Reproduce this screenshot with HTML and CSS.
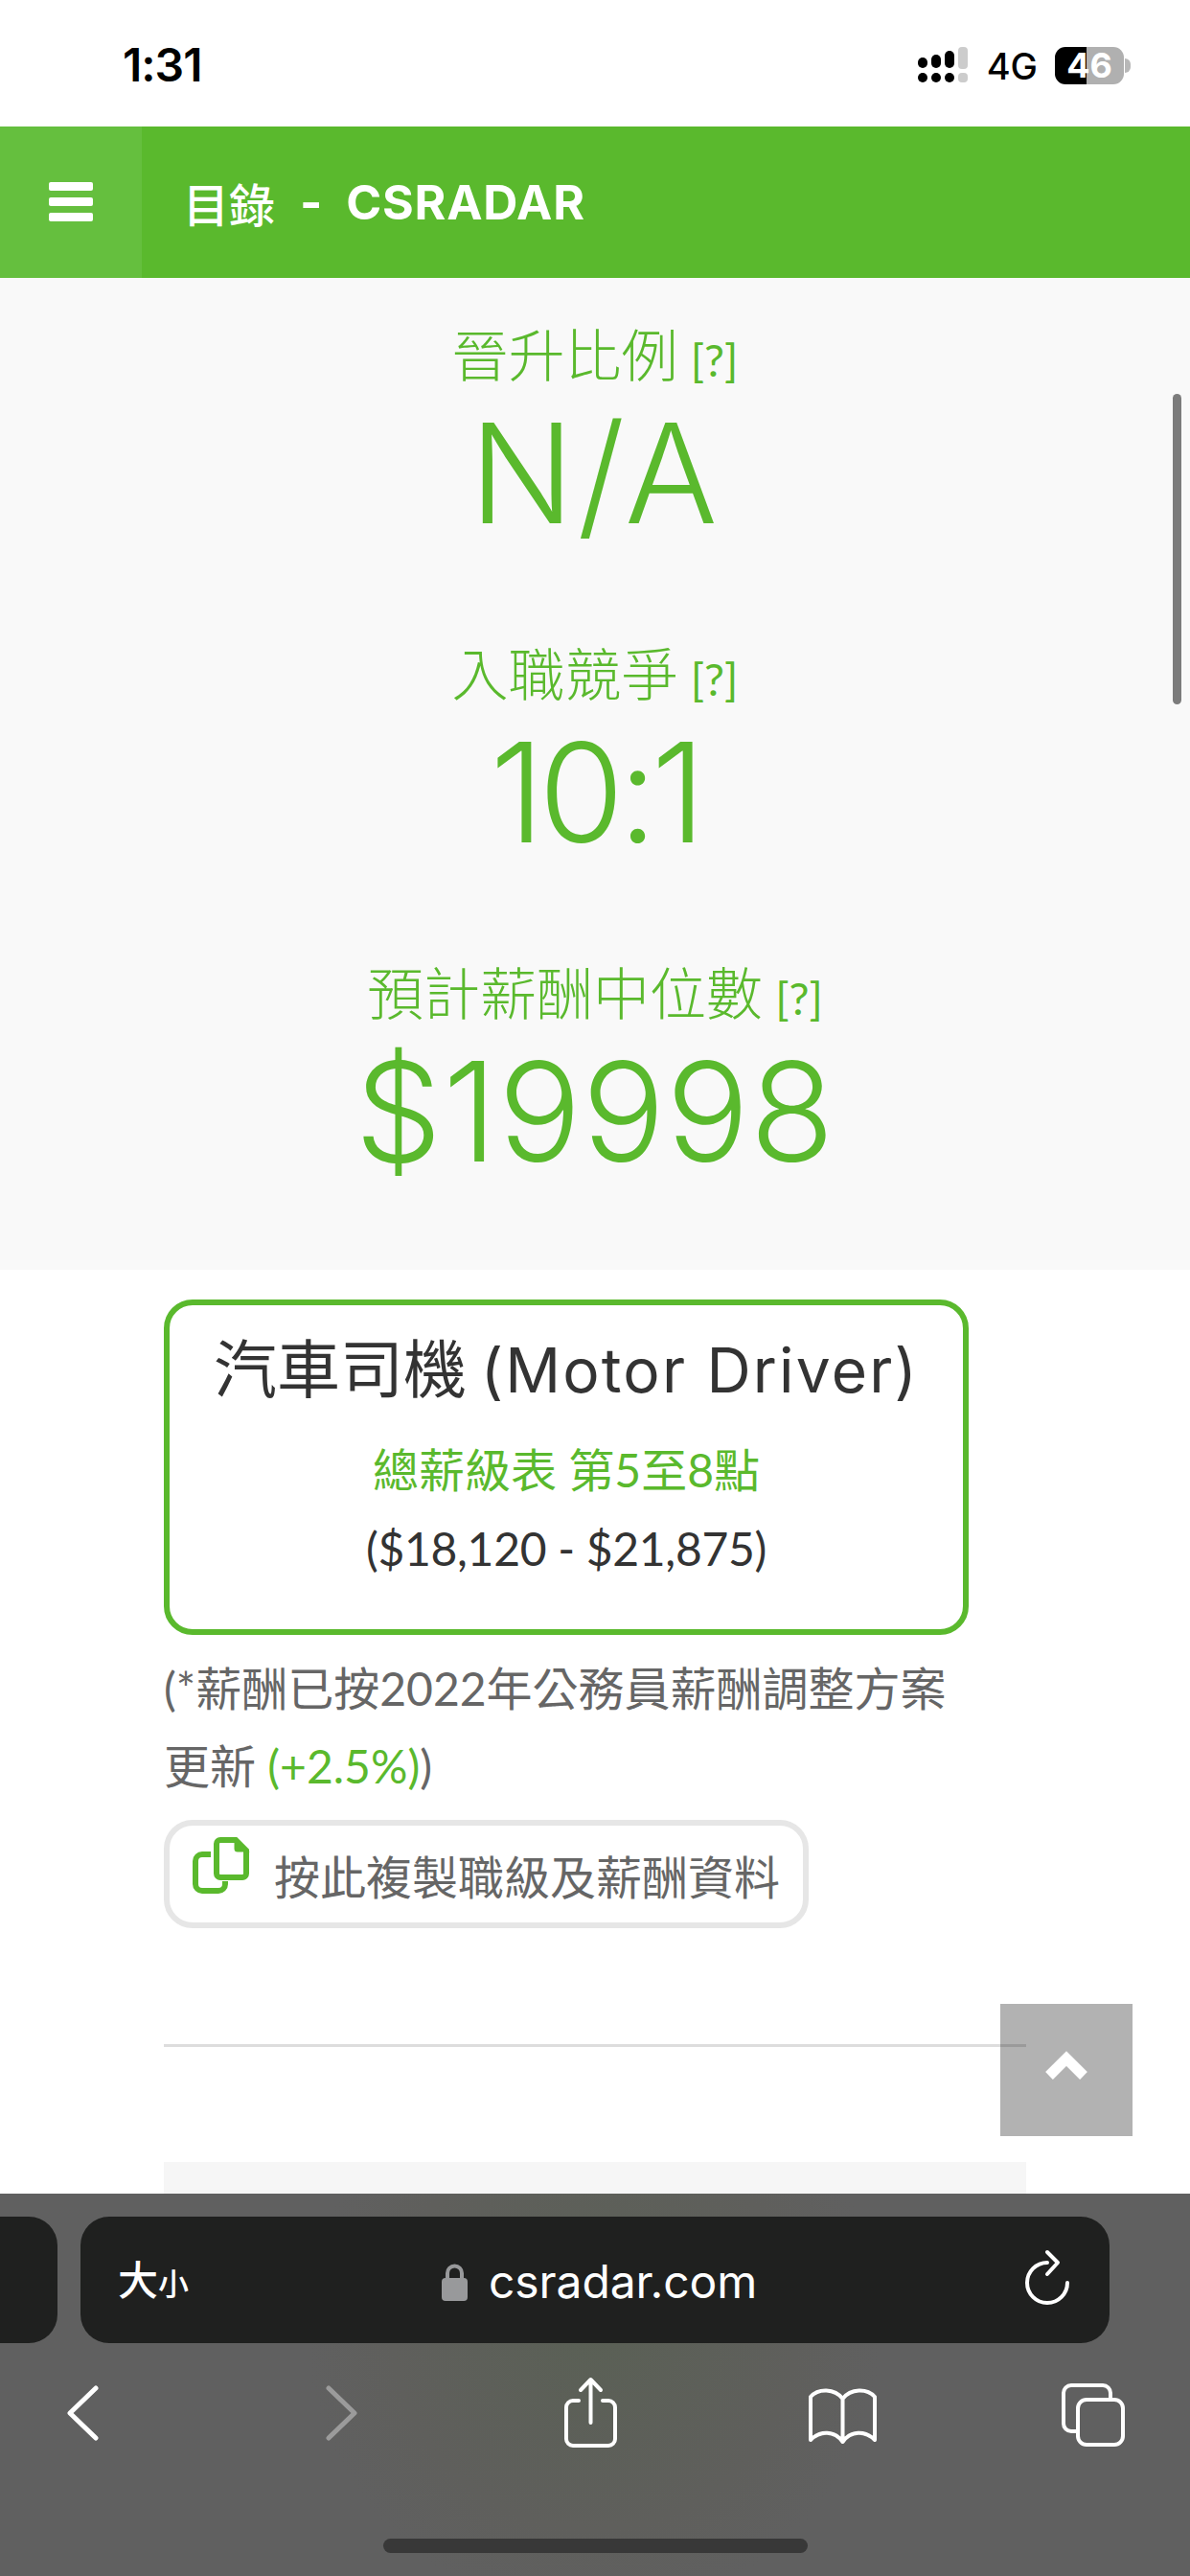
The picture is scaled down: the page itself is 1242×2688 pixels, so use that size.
FILE: index.html
```html
<!DOCTYPE html>
<html lang="zh-Hant">
<head>
<meta charset="utf-8">
<title>目錄 - CSRADAR</title>
<link rel="stylesheet" href="styles.css">
</head>
<body>
<div class="page">
  <header class="status">
    <span class="clock">1:31</span>
    <div class="status-right">
      <svg class="signal" width="52" height="38" viewBox="0 0 52 38">
        <g fill="#000">
          <rect x="0" y="11" width="10" height="11" rx="5"/><rect x="14" y="8" width="10" height="14" rx="5"/><rect x="28" y="4" width="10" height="18" rx="5"/>
          <rect x="0" y="27" width="10" height="10" rx="5"/><rect x="14" y="27" width="10" height="10" rx="5"/><rect x="28" y="27" width="10" height="10" rx="5"/>
        </g>
        <g fill="#ccc"><rect x="42" y="0" width="10" height="23" rx="4"/><rect x="42" y="27" width="10" height="10" rx="4"/></g>
      </svg>
      <span class="net">4G</span>
      <div class="battery"><span>46</span></div>
    </div>
  </header>

  <nav class="nav">
    <div class="menu"><i></i><i></i><i></i></div>
    <div class="brand"><span class="brand-cjk">目錄</span><span class="brand-dash">-</span><span>CSRADAR</span></div>
  </nav>

  <section class="stats">
    <div class="stat">
      <div class="stat-label">晉升比例 <small>[?]</small></div>
      <div class="stat-value stat-na">N/A</div>
    </div>
    <div class="stat">
      <div class="stat-label">入職競爭 <small>[?]</small></div>
      <div class="stat-value stat-ratio">10:1</div>
    </div>
    <div class="stat">
      <div class="stat-label">預計薪酬中位數 <small>[?]</small></div>
      <div class="stat-value stat-money">$19998</div>
    </div>
  </section>

  <main class="content">
    <div class="card">
      <h2 class="card-title">汽車司機 <span class="latin">(Motor Driver)</span></h2>
      <div class="card-scale">總薪級表 第5至8點</div>
      <div class="card-range">($18,120 - $21,875)</div>
    </div>
    <p class="note">(*薪酬已按2022年公務員薪酬調整方案更新 <span class="green">(+2.5%)</span>)</p>
    <button class="copy">
      <svg class="copy-icon" width="60" height="60" viewBox="0 0 60 60" fill="none" stroke="#5ab92d" stroke-width="6">
        <path d="M19 18H10a7 7 0 0 0-7 7V49a7 7 0 0 0 7 7H27a7 7 0 0 0 7-7V46"/>
        <path d="M29 3H45L56 14V38a4 4 0 0 1-4 4H29a4 4 0 0 1-4-4V7a4 4 0 0 1 4-4Z"/>
        <path d="M45 3L56 14H47a2 2 0 0 1-2-2Z" fill="#5ab92d" stroke-width="3"/>
      </svg>
      <span class="copy-text">按此複製職級及薪酬資料</span>
    </button>
    <hr class="rule">
    <div class="next-box"></div>
  </main>

  <div class="scrollbar"></div>
  <div class="to-top">
    <svg width="46" height="32" viewBox="0 0 46 32" fill="none" stroke="#fff" stroke-width="11" stroke-linejoin="miter"><path d="M5 26L23 8L41 26"/></svg>
  </div>

  <footer class="chrome">
    <div class="address-row">
      <div class="tab-prev"></div>
      <div class="address">
        <span class="aa">大<small>小</small></span>
        <div class="url">
          <svg width="27" height="40" viewBox="0 0 27 40"><path d="M6 18V11a7.500 7.500 0 0 1 15 0V18" fill="none" stroke="#98999b" stroke-width="4"/><rect x="0" y="16" width="27" height="24" rx="4" fill="#98999b"/></svg>
          <span>csradar.com</span>
        </div>
        <svg class="reload" width="50" height="58" viewBox="0 0 50 58" fill="none" stroke="#fff" stroke-width="4" stroke-linecap="round" stroke-linejoin="round"><path d="M25 14A21 21 0 1 0 46 35"/><path d="M25 3L36 14L25 26"/></svg>
      </div>
    </div>
    <div class="toolbar">
      <svg class="ti-back" width="35" height="58" viewBox="0 0 35 58" fill="none" stroke="#fff" stroke-width="5" stroke-linecap="round" stroke-linejoin="round"><path d="M31 3L4 29L31 55"/></svg>
      <svg class="ti-fwd" width="35" height="58" viewBox="0 0 35 58" fill="none" stroke="#9b9b9b" stroke-width="5" stroke-linecap="round" stroke-linejoin="round"><path d="M4 3L31 29L4 55"/></svg>
      <svg class="ti-share" width="59" height="76" viewBox="0 0 59 76" fill="none" stroke="#fff" stroke-width="4" stroke-linecap="round" stroke-linejoin="round"><path d="M17 25H11a7 7 0 0 0-7 7V65a7 7 0 0 0 7 7H48a7 7 0 0 0 7-7V32a7 7 0 0 0-7-7H42"/><path d="M29.500 3V48M19 14L29.500 3L40 14"/></svg>
      <svg class="ti-book" width="75" height="62" viewBox="0 0 75 62" fill="none" stroke="#fff" stroke-width="4" stroke-linecap="round" stroke-linejoin="round"><path d="M37.500 13C29 2 12 2 4 11V56C14 46 29 46 37.500 58C46 46 61 46 71 56V11C63 2 46 2 37.500 13ZM37.500 13V58"/></svg>
      <svg class="ti-tabs" width="70" height="70" viewBox="0 0 70 70" fill="none" stroke="#fff" stroke-width="4"><path d="M19 52H12a8 8 0 0 1-8-8V12a8 8 0 0 1 8-8H45a8 8 0 0 1 8 8V19"/><rect x="19" y="19" width="47" height="47" rx="9"/></svg>
    </div>
    <div class="home"></div>
  </footer>
</div>
</body>
</html>
```
FILE: styles.css
```css
* { box-sizing: border-box; }
html, body { margin: 0; padding: 0; background: #fff; }
body { font-family: "Lato", "Noto Sans CJK TC", sans-serif; }
.page { position: relative; width: 1242px; height: 2688px; overflow: hidden; background: #fff; }

.status { height: 132px; padding: 42px 69px 0 128px; display: flex; justify-content: space-between; align-items: flex-start; }
.clock { font: 600 48px/52px "Inter", sans-serif; letter-spacing: -1px; color: #000; }
.status-right { display: flex; align-items: flex-start; padding-top: 7px; }
.signal { display: block; margin-right: 20px; }
.net { font: 500 38px/42px "Inter", sans-serif; color: #000; margin-top: -1px; margin-right: 18px; }
.battery { position: relative; width: 72px; height: 39px; border-radius: 11px; background: linear-gradient(90deg, #000 33px, #b0b0b0 33px); color: #fff; display: flex; align-items: center; justify-content: center; font: 700 36px/39px "Inter", sans-serif; }
.battery::after { content: ""; position: absolute; left: 73px; top: 12px; width: 6px; height: 15px; border-radius: 0 8px 8px 0; background: #b8b8b8; }

.nav { height: 158px; background: #5ab92d; display: flex; align-items: center; color: #fff; }
.menu { width: 148px; height: 158px; background: #65bf3e; display: flex; flex-direction: column; justify-content: center; gap: 7px; padding: 0 51px 2px; }
.menu i { display: block; height: 9px; width: 46px; background: #fff; border-radius: 2px; }
.brand { margin-left: 43px; display: flex; align-items: center; font: 700 50px/60px "Inter", "Noto Sans CJK TC", sans-serif; letter-spacing: 0.8px; }
.brand-cjk { font: 500 48px/60px "Noto Sans CJK TC", sans-serif; letter-spacing: 0; }
.brand-dash { margin: 0 24px 0 26px; }

.stats { height: 1035px; background: #f9f9f9; padding-top: 38px; display: flex; flex-direction: column; align-items: center; gap: 85px; color: #5ab92d; }
.stat { text-align: center; }
.stat-label { height: 80px; font: 300 59px/80px "Noto Sans CJK TC", sans-serif; white-space: nowrap; }
.stat-label small { font: 400 47px/50px "Lato", sans-serif; }
.stat-value { height: 164px; margin-top: 4px; font: 300 144px/164px "Inter", sans-serif; }
.stat-na { letter-spacing: 3px; }
.stat-ratio { letter-spacing: -6px; }
.stat-money { letter-spacing: 1px; }

.content { width: 900px; margin-left: 171px; padding-top: 31px; }
.card { width: 840px; height: 350px; border: 6px solid #5ab92d; border-radius: 30px; text-align: center; padding-top: 20px; }
.card-title { margin: 0; font: 400 66px/84px "Noto Sans CJK TC", sans-serif; color: #333; white-space: nowrap; }
.card-title .latin { font: 400 64px/84px "Inter", sans-serif; letter-spacing: 2.200px; }
.card-scale { margin-top: 22px; font: 400 48px/80px "Lato", "Noto Sans CJK TC", sans-serif; color: #5ab92d; }
.card-range { font: 400 48px/84px "Lato", sans-serif; letter-spacing: -0.300px; color: #333; }
.note { margin: 15px 0 0; width: 840px; font: 400 48px/81px "Lato", "Noto Sans CJK TC", sans-serif; color: #666; }
.green { color: #5ab92d; }
.copy { display: flex; width: 673px; height: 113px; margin-top: 16px; padding: 12px 0 0 24px; align-items: flex-start; background: #fff; border: 6px solid #e6e6e6; border-radius: 30px; font: inherit; }
.copy-icon { display: block; flex: none; }
.copy-text { margin-left: 25px; padding-top: 0; font: 400 48px/78px "Noto Sans CJK TC", sans-serif; color: #666; white-space: nowrap; }
.rule { margin: 121px 0 0; height: 3px; border: 0; background: #ddd; }
.next-box { margin-top: 120px; height: 60px; background: #f6f6f6; }

.scrollbar { position: absolute; left: 1224px; top: 411px; width: 9px; height: 324px; border-radius: 5px; background: #7c7c7c; }
.to-top { position: absolute; left: 1044px; top: 2091px; width: 138px; height: 138px; background: rgba(0, 0, 0, 0.3); display: flex; align-items: center; justify-content: center; padding-bottom: 8px; }

.chrome { position: absolute; left: 0; right: 0; top: 2289px; height: 399px; background: radial-gradient(ellipse 300px 300px at 620px 140px, #5a6055 0%, #5f5f5c 70%, #606060 100%); }
.address-row { display: flex; gap: 24px; padding-top: 24px; margin-left: -60px; }
.tab-prev { width: 120px; height: 132px; border-radius: 30px; background: #1f201f; }
.address { position: relative; width: 1074px; height: 132px; border-radius: 30px; background: #1f201f; color: #fff; display: flex; align-items: center; justify-content: space-between; padding: 0 40px 0 39px; }
.aa { font: 500 42px/50px "Noto Sans CJK TC", sans-serif; }
.aa small { font-size: 32px; }
.url { position: absolute; left: 377px; top: 40px; display: flex; align-items: center; gap: 22px; font: 400 48px/56px "Inter", sans-serif; letter-spacing: -0.100px; }
.reload { display: block; margin-top: -6px; }
.toolbar { display: flex; align-items: flex-start; padding: 44px 0 0 69px; height: 144px; }
.toolbar svg { display: block; flex: none; }
.ti-fwd { margin-left: 235px; }
.ti-share { margin-left: 213px; margin-top: -9px; }
.ti-book { margin-left: 196px; margin-top: 1px; }
.ti-tabs { margin-left: 189px; margin-top: -4px; }
.home { margin: 60px auto 0; width: 443px; height: 15px; border-radius: 8px; background: #383838; }
```
